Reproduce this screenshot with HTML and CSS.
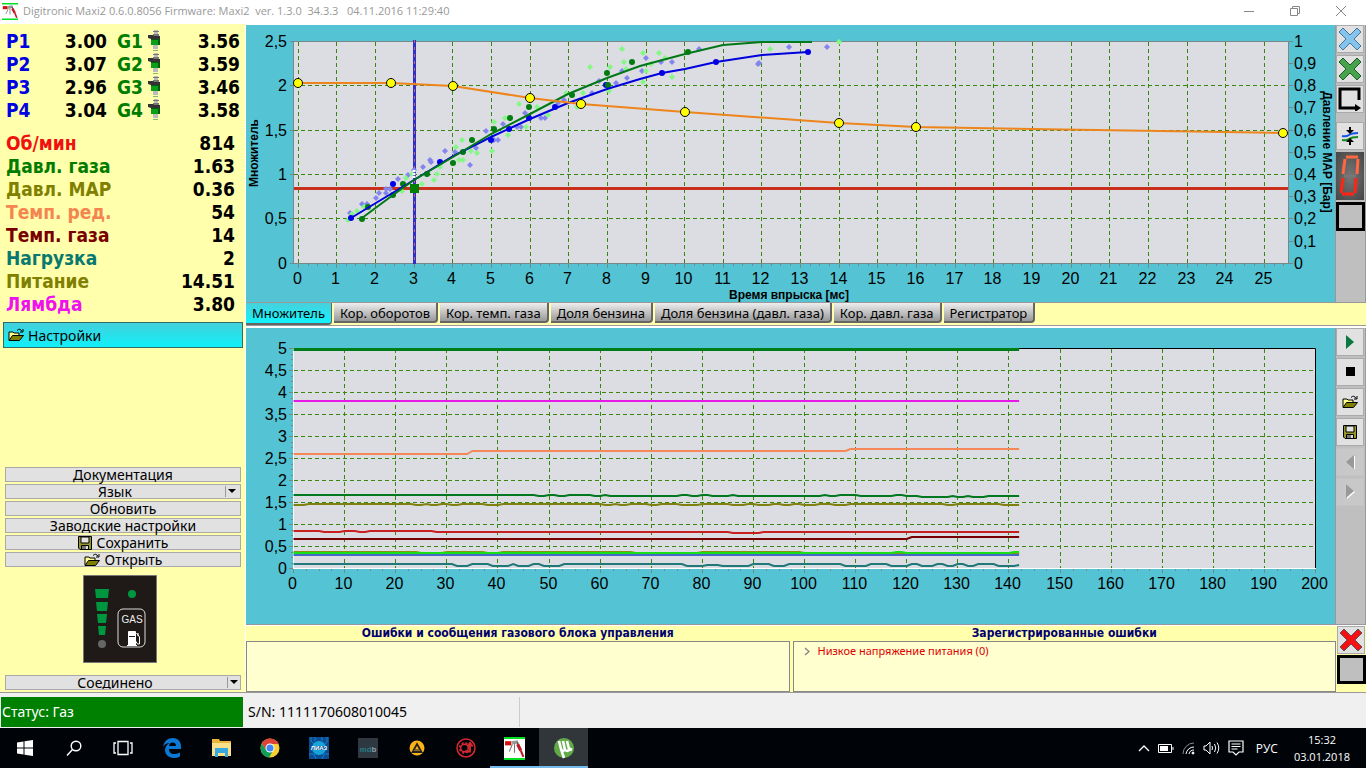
FILE: index.html
```html
<!DOCTYPE html>
<html lang="ru">
<head>
<meta charset="utf-8">
<title>Digitronic Maxi2</title>
<link rel="stylesheet" href="styles.css">
</head>
<body>
<svg class="defs" aria-hidden="true">
  <symbol id="app" viewBox="0 0 20 22" preserveAspectRatio="none"><path fill="#fff" d="M0 0h20v22H0z"/><path fill="#00e020" d="M0 0h20v2H0zM0 20h20v2H0z"/><path fill="#d01010" d="M1 4h6v4H1z"/><path fill="#999" d="M7 4l6-1 1 3-6 1z"/><path d="M8 7L5 14M10 6v9" stroke="#777" fill="none"/><path d="M12.500 5L15 12" stroke="#555" stroke-width="1.500"/><path d="M13 7l3 6" stroke="#c01824" stroke-width="3"/><path d="M16 13l2.500 6" stroke="#c01824" stroke-width="2"/></symbol>
  <symbol id="folder" viewBox="0 0 16 14"><path d="M1 12V4h4l1 1h5v2" fill="#ffff90" stroke="#000"/><path d="M1 12.500L4.500 7.500h11L11.500 12.500z" fill="#808000" stroke="#000"/><path d="M9 2.500q3-3 5 1M15 1v3h-3" fill="none" stroke="#000"/></symbol>
  <symbol id="floppy" viewBox="0 0 14 14"><path d="M.5.5h13v13H2l-1.500-1.500z" fill="#98982a" stroke="#000"/><path d="M3 1h8v6H3z" fill="#e4e4e4" stroke="#000"/><path d="M3.500 9.500h7v4h-7z" fill="#777" stroke="#000"/><path fill="#ddd" d="M8 10h2v3H8z"/></symbol>
  <symbol id="cross" viewBox="0 0 26 26"><path d="M6 2L13 9L20 2L24 6L17 13L24 20L20 24L13 17L6 24L2 20L9 13L2 6z"/></symbol>
  <symbol id="injector" viewBox="0 0 14 23"><path fill="#bbb" d="M6 0h4v6H6z"/><path fill="#777" d="M5 1h6v1H5zM5 4h6v2H5z"/><path fill="#333" d="M0 5h5l1 1h6v3H3L0 8z"/><path fill="#08a018" d="M3 9h9v6H3z"/><path fill="#055c10" d="M10 9h2v6h-2zM3 9h9v1H3z"/><path fill="#bbb" d="M5 15h5v4H5z"/><path fill="#7db87d" d="M5 20h5v1H5z"/></symbol>
</svg>

<header class="titlebar">
  <svg class="titlebar-icon"><use href="#app"/></svg>
  <h1 class="titlebar-text">Digitronic Maxi2 0.6.0.8056 Firmware: Maxi2&nbsp; ver. 1.3.0&nbsp; 34.3.3&nbsp;&nbsp; 04.11.2016 11:29:40</h1>
  <button class="win-button" aria-label="Свернуть"><svg width="12" height="12"><path d="M1 6.500h10"/></svg></button>
  <button class="win-button" aria-label="Развернуть"><svg width="12" height="12"><path d="M1.500 3.500h7v7h-7zM3.500 3V1.500h7v7H9"/></svg></button>
  <button class="win-button" aria-label="Закрыть"><svg width="12" height="12"><path d="M1 1l10 10M11 1L1 11"/></svg></button>
</header>

<main class="workspace">
  <aside class="sidebar">
    <table class="injection">
      <tr><th class="blue">P1</th><td>3.00</td><th class="green">G1</th><td class="inj"><svg><use href="#injector"/></svg></td><td>3.56</td></tr>
      <tr><th class="blue">P2</th><td>3.07</td><th class="green">G2</th><td class="inj"><svg><use href="#injector"/></svg></td><td>3.59</td></tr>
      <tr><th class="blue">P3</th><td>2.96</td><th class="green">G3</th><td class="inj"><svg><use href="#injector"/></svg></td><td>3.46</td></tr>
      <tr><th class="blue">P4</th><td>3.04</td><th class="green">G4</th><td class="inj"><svg><use href="#injector"/></svg></td><td>3.58</td></tr>
    </table>
    <table class="params">
      <tr><th class="red">Об/мин</th><td>814</td></tr>
      <tr><th class="green">Давл. газа</th><td>1.63</td></tr>
      <tr><th class="olive">Давл. MAP</th><td>0.36</td></tr>
      <tr><th class="coral">Темп. ред.</th><td>54</td></tr>
      <tr><th class="maroon">Темп. газа</th><td>14</td></tr>
      <tr><th class="teal">Нагрузка</th><td>2</td></tr>
      <tr><th class="olive">Питание</th><td>14.51</td></tr>
      <tr><th class="magenta">Лямбда</th><td>3.80</td></tr>
    </table>
    <button class="settings"><svg width="16" height="14"><use href="#folder"/></svg>Настройки</button>
    <div class="actions">
      <button class="action">Документация</button>
      <div class="combo"><select class="action" aria-label="Язык"><option>Язык</option></select><svg class="combo-arrow" width="12" height="11"><path d="M.5 0v11" stroke="#999"/><path d="M3 3h8L7 7z"/></svg></div>
      <button class="action">Обновить</button>
      <button class="action">Заводские настройки</button>
      <button class="action"><svg width="14" height="14"><use href="#floppy"/></svg>Сохранить</button>
      <button class="action"><svg width="16" height="14"><use href="#folder"/></svg>Открыть</button>
    </div>
    <svg class="gas" viewBox="0 0 74 88" role="img" aria-label="GAS">
      <path fill="#1f1a17" stroke="#777" d="M.5.5h73v87H.5z"/>
      <g fill="#009640"><path d="M12 14h14l-1 9H13zM13 27h12l-1 9H14zM14 39h10l-1 9h-8zM15 51h8l-1 9h-6z"/><circle cx="49" cy="19" r="4"/></g>
      <circle cx="19" cy="69" r="4" fill="#666"/>
      <rect x="35" y="34" width="27" height="38" rx="5" fill="none" stroke="#ddd"/>
      <text class="gas-text" x="49" y="48">GAS</text>
      <path fill="#fff" d="M46 57h6v4h-6zM44 70h10v1H44zM45 62h8v8h-8z"/><path fill="none" stroke="#fff" d="M45.500 70V56.500h7V66l2 3h2v-7l-3-4M55 58v3"/>
    </svg>
    <div class="combo"><select class="action" aria-label="Соединение"><option>Соединено</option></select><svg class="combo-arrow" width="12" height="11"><path d="M.5 0v11" stroke="#999"/><path d="M3 3h8L7 7z"/></svg></div>
  </aside>

  <section class="content">
    <div class="map-row">
      <svg class="chart" id="map" viewBox="0 0 1089 275" preserveAspectRatio="xMinYMin" role="img" aria-label="Множитель"></svg>
      <div class="toolbar">
        <button class="tool" aria-label="Удалить бензин"><svg width="26" height="26" fill="#84c4ec" stroke="#43749a"><use href="#cross"/></svg></button>
        <button class="tool" aria-label="Удалить газ"><svg width="26" height="26" fill="#46a34c" stroke="#1c5a2a"><use href="#cross"/></svg></button>
        <button class="tool" aria-label="Контур"><svg width="24" height="24"><path d="M21 13V2H2v19h16" fill="none" stroke="#000" stroke-width="3"/><path d="M17 17l6 4-6 4z"/></svg></button>
        <button class="tool gap" aria-label="Совместить"><svg width="18" height="18"><path d="M1 9q4 1 7-1t9-2" stroke="#1455e8" stroke-width="2" fill="none"/><path d="M1 13q4 1 7-1t9-2" stroke="#118a22" stroke-width="2" fill="none"/><path d="M8 0h2v3h3L9 7 5 3h3zM8 18h2v-3h3l-4-4-4 4h3z"/></svg></button>
        <div class="digit"><svg width="20" height="42" viewBox="0 0 20 42"><g fill="none" stroke-width="3"><path stroke="#ff6840" d="M6 2h12M5 4L3 19M18 4l-1 15"/><path stroke="#ff2414" d="M3 23L1 38M16 23l-1 15M2 39h12"/><path stroke="#777" d="M4 21h12"/></g></svg></div>
        <button class="swatch" aria-label="Цвет"></button>
      </div>
    </div>
    <nav class="tabs" role="tablist">
      <button class="tab active" role="tab">Множитель</button><button class="tab" role="tab">Кор. оборотов</button><button class="tab" role="tab">Кор. темп. газа</button><button class="tab" role="tab">Доля бензина</button><button class="tab" role="tab">Доля бензина (давл. газа)</button><button class="tab" role="tab">Кор. давл. газа</button><button class="tab" role="tab">Регистратор</button>
    </nav>
    <div class="scope-row">
      <svg class="chart" id="scope" viewBox="0 0 1089 293" preserveAspectRatio="xMinYMin" role="img" aria-label="Осциллограф"></svg>
      <div class="toolbar">
        <button class="tool" aria-label="Пуск"><svg width="8" height="14"><path fill="#087840" d="M0 0l8 7-8 7z"/></svg></button>
        <button class="tool" aria-label="Стоп"><svg width="9" height="9"><path d="M0 0h9v9H0z"/></svg></button>
        <button class="tool" aria-label="Открыть"><svg width="16" height="14"><use href="#folder"/></svg></button>
        <button class="tool" aria-label="Сохранить"><svg width="14" height="14"><use href="#floppy"/></svg></button>
        <button class="tool" disabled aria-label="Назад"><svg width="9" height="14"><path fill="#fff" d="M8 1h1v13H8z"/><path fill="#999" d="M8 0v14L0 7z"/></svg></button>
        <button class="tool" disabled aria-label="Вперёд"><svg width="9" height="15"><path fill="#fff" d="M1 1l8 7-8 7z"/><path fill="#999" d="M0 0l8 7-8 7z"/></svg></button>
      </div>
    </div>
    <div class="errors">
      <section class="error-panel"><h2>Ошибки и сообщения газового блока управления</h2><div class="error-list"></div></section>
      <section class="error-panel"><h2>Зарегистрированные ошибки</h2><div class="error-list"><svg width="6" height="9"><path d="M1 1l4 3.500L1 8" fill="none" stroke="#888" stroke-width="1.500"/></svg>Низкое напряжение питания (0)</div></section>
      <div class="error-tools">
        <button class="tool" aria-label="Стереть ошибки"><svg width="26" height="26" fill="#f81010" stroke="#556" stroke-width="1"><use href="#cross"/></svg></button>
        <button class="swatch" aria-label="Цвет"></button>
      </div>
    </div>
  </section>
</main>

<footer class="statusbar"><span class="status">Статус: Газ</span><span class="serial">S/N: 1111170608010045</span></footer>

<nav class="taskbar">
  <button class="task" aria-label="Пуск"><svg width="16" height="16" fill="#fff"><path d="M0 2.500l6.500-1v6H0zM7.500 1.300L16 0v7.500H7.500zM0 8.500h6.500v6L0 13.500zM7.500 8.500H16V16l-8.500-1.300z"/></svg></button>
  <button class="task" aria-label="Поиск"><svg width="16" height="16" fill="none" stroke="#fff" stroke-width="1.400"><circle cx="10" cy="6" r="4.800"/><path d="M6.500 9.500L1 15.500"/></svg></button>
  <button class="task" aria-label="Представление задач"><svg width="20" height="16" fill="none" stroke="#fff" stroke-width="1.300"><path d="M5 1.500h10v13H5zM3 3H1v10h2M17 3h2v10h-2"/></svg></button>
  <button class="task" aria-label="Edge"><svg width="20" height="20" viewBox="0 0 20 20"><path fill="#0a78d4" d="M1 9C2 3 6 0 11 0c5 0 8 4 8 8v3H7c0 3 2 5 5 5 2 0 4-.5 6-1.500v4C16 19.500 14 20 12 20c-6 0-9-4-9-8 0-3 2-6 5-7C4 5 2 7 1 9zm6-1h7c0-2-1-3.500-3.200-3.500S7.300 6 7 8z"/></svg></button>
  <button class="task" aria-label="Проводник"><svg width="20" height="20"><path fill="#e9b53c" d="M1 1h7l1 2h11v15H1z"/><path fill="#fbe08b" d="M1 5h19v13H1z"/><path fill="#38a9e0" d="M4 10h13v9h-3v-4H7v4H4z"/></svg></button>
  <button class="task" aria-label="Chrome"><svg width="20" height="20"><circle cx="10" cy="10" r="9.500" fill="#f9cf31"/><path fill="#db4437" d="M1.700 5.500a9.500 9.500 0 0 1 17 .5H10L6 12z"/><path fill="#109d58" d="M1.700 5.500A9.500 9.500 0 0 0 9 19.500L13.500 12 6 12z"/><circle cx="10" cy="10" r="4.500" fill="#fff"/><circle cx="10" cy="10" r="3.500" fill="#4285f4"/></svg></button>
  <button class="task" aria-label="Диагностика"><svg width="20" height="22"><path fill="#0b4c92" d="M0 0h20v22H0z"/><path stroke="#1480c8" fill="none" d="M2 0v4l3 3M18 0v5l-3 3M0 17h5l2 5M20 17h-5l-2 5M6 0v4M13 0v4"/><ellipse cx="10" cy="11" rx="7" ry="7" fill="#16a4d8"/><path fill="#0b5c9c" d="M3 9h14v4H3z"/><text class="logo-white" x="10" y="13">ЛИАЗ</text></svg></button>
  <button class="task" aria-label="mdb"><svg width="20" height="20"><path fill="#2d3840" d="M0 0h20v20H0z"/><text class="logo-grey" x="10" y="14"><tspan class="logo-teal">md</tspan>b</text></svg></button>
  <button class="task" aria-label="AIMP"><svg width="18" height="18"><circle cx="9" cy="9" r="7.500" fill="#fcb316"/><path d="M9 5l4.500 8h-9z" fill="none" stroke="#222" stroke-width="1.800"/><path d="M7 11h4" stroke="#222"/></svg></button>
  <button class="task" aria-label="Сервис"><svg width="20" height="22" fill="none" stroke="#d82830"><circle cx="10" cy="11" r="9" stroke-width="1.500"/><circle cx="8.500" cy="11" r="3.800" stroke-width="1.500"/><circle cx="8.500" cy="11" r="5" stroke-width="1.500" stroke-dasharray="2 2"/><path d="M9 14.500h5V8" stroke-width="1.800"/><path d="M11 9L14 5l3 4z" fill="#d82830"/></svg></button>
  <button class="task running" aria-label="Digitronic"><svg width="21" height="23"><use href="#app"/></svg></button>
  <button class="task running current" aria-label="µTorrent"><svg width="22" height="24"><circle cx="11" cy="12" r="10" fill="#62aa48"/><path d="M6 5l2 8q1 3 4 1l-2-9M12 14q3 2 5-1l2 1M14 5l2 8M8 13l3 9" stroke="#fff" stroke-width="2.600" fill="none"/></svg></button>
  <div class="tray">
    <svg width="12" height="7" fill="none" stroke="#fff" stroke-width="1.300"><path d="M1 6l5-5 5 5"/></svg>
    <svg width="16" height="9"><path fill="none" stroke="#fff" d="M.5.5h13v8H.5zM15 3v3"/><path fill="#fff" d="M2 2h8v5H2z"/></svg>
    <svg width="13" height="13" fill="none" stroke="#fff"><path stroke="#888" d="M1 12A11 11 0 0 1 12 1"/><path d="M4 12a8 8 0 0 1 8-7M7 12a5 5 0 0 1 5-4"/><circle cx="11" cy="11" r="1" fill="#fff"/></svg>
    <svg width="17" height="14" fill="none" stroke="#fff"><path d="M1 5h2l4-4v12L3 9H1zM9 5q1 2 0 4M11.500 3q2.500 4 0 8M14 1.500q3.500 5.500 0 11"/></svg>
    <svg width="16" height="16" fill="none" stroke="#fff" stroke-width="1.200"><path d="M1 1h14v11h-4l-3 3-3-3H1zM3.500 4h9M3.500 6.500h9M3.500 9h6"/></svg>
    <span class="lang">РУС</span>
    <time class="clock">15:32<br>03.01.2018</time>
  </div>
</nav>
<script src="charts.js"></script>
</body>
</html>
```

FILE: styles.css
```css
* { box-sizing: border-box; }
body {
  margin: 0;
  height: 100vh;
  display: flex;
  flex-direction: column;
  background: #fff;
  color: #000;
  font: 14px/17px "Noto Sans", sans-serif;
  overflow: hidden;
}
button, select { font: inherit; color: inherit; margin: 0; padding: 0; border: 0; background: none; }
svg { flex: none; display: block; }
.defs { position: absolute; width: 0; height: 0; }

.titlebar { height: 24px; flex: none; display: flex; align-items: center; padding: 0 2px 2px 2px; }
.titlebar-icon { width: 16px; height: 17px; }
.titlebar-text { flex: 1; margin: 0 0 0 5px; font: 11px/16px "Open Sans", sans-serif; color: #999; white-space: nowrap; }
.win-button { width: 46px; height: 22px; display: grid; place-items: center; }
.win-button svg { fill: none; stroke: #888; }

.workspace { flex: 1; min-height: 0; display: flex; background: #ffffac; border-bottom: 1px solid #999; }
.sidebar { width: 246px; flex: none; display: flex; flex-direction: column; padding: 6px 2px 2px 3px; border-right: 1px solid #fff; }
.injection, .params { border-collapse: collapse; font: bold 19px/23px "DejaVu Sans Condensed", "DejaVu Sans", sans-serif; }
.injection th, .params th { text-align: left; padding: 0 0 0 3px; }
.injection td, .params td { text-align: right; padding: 0; }
.injection { width: 237px; table-layout: fixed; margin-bottom: 10px; }
.injection th:first-child { width: 40px; }
.injection td:nth-child(2) { width: 64px; }
.injection th:nth-child(3) { width: 38px; padding-left: 10px; }
.injection .inj { width: 20px; }
.injection .inj svg { width: 14px; height: 23px; margin-left: 3px; }
.params { width: 232px; }
.blue { color: #0000e0; }
.green { color: #007c00; }
.red { color: #f01010; }
.olive { color: #808000; }
.coral { color: #f58550; }
.maroon { color: #780000; }
.teal { color: #087870; }
.magenta { color: #f010f0; }
.settings { height: 26px; margin-top: 6px; padding-left: 4px; display: flex; align-items: center; gap: 4px; border: 1px solid #336b6b; background: linear-gradient(#42d0dc, #10f0f8); }
.actions { margin-top: auto; display: flex; flex-direction: column; gap: 2px; padding: 0 2px; }
.action { width: 100%; height: 15px; display: flex; justify-content: center; align-items: center; gap: 5px; border: 1px solid #aaa; background: #e1e1e1; line-height: 15px; white-space: nowrap; }
select.action { appearance: none; text-align: center; text-align-last: center; padding-right: 16px; line-height: 13px; }
.combo { position: relative; }
.sidebar > .combo { padding: 0 2px; }
.combo-arrow { position: absolute; right: 4px; top: 2px; }
.gas { width: 74px; height: 88px; margin: 8px 0 12px 80px; }
.gas-text { font: 10px "Liberation Sans", sans-serif; fill: #eee; text-anchor: middle; }

.content { flex: 1; min-width: 0; display: flex; flex-direction: column; }
.map-row, .scope-row { min-height: 0; display: flex; background: #54c4d4; border-top: 1px solid #fff; }
.map-row { flex: 277 1 0; }
.scope-row { flex: 297 1 0; border-bottom: 1px solid #999; border-top: 2px solid #fff; }
.chart { flex: 1; min-width: 0; height: 100%; overflow: visible; font: 16px "Liberation Sans", sans-serif; }
.chart .end { text-anchor: end; }
.chart .mid { text-anchor: middle; }
.chart .axis { font: bold 12px "Liberation Sans", sans-serif; text-anchor: middle; }
.grid-line { stroke: #388810; stroke-dasharray: 4 3; }
.axis-line { stroke: #788; fill: none; }
.toolbar { width: 31px; flex: none; display: flex; flex-direction: column; gap: 2px; background: #bfbfbf; border-left: 1px solid #999; border-right: 1px solid #999; }
.tool { width: 28px; height: 28px; flex: none; display: grid; place-items: center; border: 1px solid #aaa; background: #e1e1e1; overflow: hidden; }
.tool:disabled { background: #c8c8c8; border-color: #c4c4c4; }
.gap { margin-top: 7px; }
.digit { height: 48px; width: 28px; display: grid; place-items: center; background: radial-gradient(#777, #444); }
.swatch { width: 29px; height: 29px; flex: none; border: 3px solid #000; background: #bfbfbf; }

.tabs { height: 24px; flex: none; display: flex; gap: 2px; border-top: 1px solid #999; border-bottom: 1px solid #999; font-size: 13px; }
.tab { height: 20px; padding: 2px 6px 0; border-right: 2px solid #666; border-bottom: 2px solid #666; border-radius: 0 0 4px 0; background: linear-gradient(#eee, #999); white-space: nowrap; }
.tab.active { height: 22px; background: linear-gradient(#48d0dc, #10f4fc); border-right-width: 1px; }

.errors { height: 67px; flex: none; display: flex; gap: 3px; border-top: 1px solid #fff; }
.error-panel { flex: 1; min-width: 0; display: flex; flex-direction: column; }
.error-panel h2 { margin: 0; font: bold 12px/15px "DejaVu Sans Condensed", "DejaVu Sans", sans-serif; color: #000070; text-align: center; }
.error-list { flex: 1; display: flex; align-items: flex-start; gap: 8px; padding: 2px 10px; border: 1px solid #888; background: #ffffd0; color: #e00000; font-size: 11px; line-height: 13px; }
.error-list svg { margin-top: 3px; }
.error-tools { width: 29px; margin-left: -2px; display: flex; flex-direction: column; gap: 1px; }

.statusbar { height: 35px; flex: none; display: flex; align-items: center; padding: 3px 1px 1px; background: #f0f0f0; }
.status { width: 242px; height: 30px; padding-left: 1px; line-height: 30px; background: #008000; color: #fff; }
.serial { width: 277px; height: 30px; padding-left: 5px; line-height: 30px; border-right: 1px solid #ccc; }

.taskbar { height: 40px; flex: none; display: flex; background: #000409; color: #fff; }
.task { width: 49px; display: grid; place-items: center; }
.running { box-shadow: inset 0 -2px #76b9ed; }
.current { background: #30363a; }
.logo-white, .logo-grey { font: bold 6px "Liberation Sans", sans-serif; fill: #fff; text-anchor: middle; }
.logo-grey { font-size: 8px; fill: #99a; }
.logo-teal { fill: #2a7884; }
.tray { margin-left: auto; padding-right: 16px; display: flex; align-items: center; gap: 10px; font: 11px/17px "Open Sans", sans-serif; }
.tray svg { margin-right: -2px; }
.lang { font-size: 12px; margin-left: 4px; }
.clock { text-align: center; margin-left: 6px; }
```

FILE: charts.js
```js
const NS = 'http://www.w3.org/2000/svg';
const add = (svg, tag, attrs, text) => {
  const el = document.createElementNS(NS, tag);
  for (const key in attrs) el.setAttribute(key, attrs[key]);
  if (text !== undefined) el.textContent = text;
  svg.appendChild(el);
};
const line = (svg, cls, x1, y1, x2, y2) => add(svg, 'path', { class: cls, d: `M${x1} ${y1}L${x2} ${y2}` });
const curve = (svg, pts, stroke, width) => add(svg, 'polyline', { points: pts, fill: 'none', stroke, 'stroke-width': width });
const pairs = s => s.split(' ').map(p => p.split(',').map(Number));
const crisp = v => Math.floor(v) + 0.5;
const comma = v => String(v).replace('.', ',');

// Multiplier map
const map = document.getElementById('map');
add(map, 'rect', { x: 48, y: 16, width: 995, height: 223, fill: '#dcdde2' });
for (let i = 0; i <= 25; i++) {
  const x = crisp(52.3 + 38.64 * i);
  line(map, 'grid-line', x, 17, x, 238);
  line(map, 'axis-line', x, 239, x, 243);
  for (let k = 1; k < 4 && i + k / 4 <= 25.5; k++) line(map, 'axis-line', crisp(x + 9.66 * k), 239, crisp(x + 9.66 * k), 241);
  add(map, 'text', { class: 'mid', x: x - 1, y: 259 }, i);
}
for (let i = 0; i <= 5; i++) {
  const y = crisp(238.3 - 44.4 * i);
  if (i && i < 5) line(map, 'grid-line', 48, y, 1042, y);
  line(map, 'axis-line', 44, y, 48, y);
  add(map, 'text', { class: 'end', x: 41, y: y + 5.5 }, comma(i / 2));
}
for (let i = 0; i <= 10; i++) {
  const y = crisp(238.3 - 22.2 * i);
  line(map, 'axis-line', 1043, y, 1047, y);
  add(map, 'text', { x: 1048, y: y + 5.5 }, comma(i / 10));
}
add(map, 'rect', { class: 'axis-line', x: 47.5, y: 16.5, width: 995, height: 222 });
add(map, 'path', { d: 'M168.500 15V239', stroke: '#3030c8', 'stroke-width': 3 });
add(map, 'path', { d: 'M168.500 15V239', stroke: '#c06870', 'stroke-dasharray': '3 4' });
add(map, 'path', { d: 'M48 163.500H1042', stroke: '#c8301c', 'stroke-width': 3 });

const small = (s, fill) => pairs(s).forEach(([x, y]) => add(map, 'path', { d: `M${x} ${y - 3}l3 3l-3 3l-3 -3z`, fill }));
const large = (s, fill) => pairs(s).forEach(([x, y]) => add(map, 'circle', { cx: x, cy: y, r: 3, fill }));
small('104,188 116,179 121,179 130,173 133,168 140,168 140,164 144,164 152,154 162,150 168,145 177,142 184,135 185,137 199,126 209,127 224,140 230,123 240,106 248,115 252,115 257,99 271,102 275,102 279,88 295,93 299,93 312,78 318,75 346,68 353,56 370,58 376,46 381,53 396,46 400,33 415,37 426,37 453,24 512,39 513,38 543,22 581,22', '#8484ee');
small('102,195 106,189 111,186 118,182 156,166 160,153 166,149 176,159 188,155 191,149 194,142 210,122 213,135 217,135 216,115 225,126 231,128 246,126 248,97 259,93 262,110 273,79 280,102 291,82 302,90 320,68 331,82 337,68 344,42 364,42 363,66 376,24 378,37 380,44 397,28 405,39 400,46 397,57 413,28 419,33 426,52 524,24 593,17', '#84f884');
large('105,193 147,159 194,137 245,115 263,104 283,93 309,82 360,60 416,48 470,37 562,27', '#0000e8');
large('116,194 122,182 147,170 157,159 181,149 207,138 217,127 226,115 248,104 264,93 283,82 326,70 362,60 361,48 386,37 442,27', '#007c10');
curve(map, '105,193 168,155 207,131 245,112 284,94 322,78 361,64 394,54 416,48 439,44 470,37 516,30 562,27', '#0000dc', 2);
curve(map, '116,193 147,170 168,155 207,132 245,109 284,89 322,69 361,53 394,41 439,29 477,20 516,17 566,17', '#007818', 2);
const pressure = '52,58 145,58 207,61 284,73 335,79 439,87 593,98 670,102 1037,108';
curve(map, pressure, '#ee851c', 2);
pairs(pressure).forEach(([x, y]) => add(map, 'circle', { cx: x, cy: y, r: 4.5, fill: '#ffff00', stroke: '#000' }));
add(map, 'rect', { x: 164, y: 159, width: 9, height: 9, fill: '#008000' });
add(map, 'path', { d: 'M168 145v9', stroke: '#fff', 'stroke-width': 3, 'stroke-dasharray': '2 1' });
add(map, 'text', { class: 'axis', transform: 'translate(12 128) rotate(-90)' }, 'Множитель');
add(map, 'text', { class: 'axis', x: 543, y: 274 }, 'Время впрыска [мс]');
add(map, 'text', { class: 'axis', transform: 'translate(1077 127) rotate(90)' }, 'Давление MAP [Бар]');

// Recorder
const scope = document.getElementById('scope');
const sx = v => 47.5 + 5.11 * v;
add(scope, 'rect', { x: 47, y: 20, width: 1023, height: 221, fill: '#dcdde2' });
for (let i = 0; i <= 20; i++) {
  const x = crisp(sx(i * 10));
  if (i && i < 20) line(scope, 'grid-line', x, 21, x, 240);
  line(scope, 'axis-line', x, 241, x, 245);
  for (let k = 1; k < 4 && i < 20; k++) line(scope, 'axis-line', crisp(x + 12.8 * k), 241, crisp(x + 12.8 * k), 243);
  add(scope, 'text', { class: 'mid', x: x - 1, y: 261 }, i * 10);
}
for (let i = 0; i <= 10; i++) {
  const y = crisp(240 - 22 * i);
  if (i && i < 10) line(scope, 'grid-line', 48, y, 1069, y);
  line(scope, 'axis-line', 43, y, 47, y);
  for (let k = 1; k < 4 && i < 10; k++) line(scope, 'axis-line', 45, crisp(y - 5.5 * k), 47, crisp(y - 5.5 * k));
  add(scope, 'text', { class: 'end', x: 41, y: y + 5.5 }, comma(i / 2));
}
add(scope, 'path', { d: 'M47.500 20.500H1069.500V241', stroke: '#000', fill: 'none' });
add(scope, 'path', { d: 'M47.500 20V240.500H1070', stroke: '#fff', fill: 'none' });

// A level is held until the next change point; the last one runs to t = 142
const trace = (steps, color, width = 2) => {
  const pts = [];
  pairs(steps).forEach(([t, y], i, all) => {
    const end = i + 1 < all.length ? all[i + 1][0] - 1 : 142;
    pts.push(`${sx(t)},${y}`, `${sx(Math.max(t, end))},${y}`);
  });
  curve(scope, pts.join(' '), color, width);
};
trace('0,21.5', '#007c18', 3);
trace('0,73', '#e818e8');
trace('0,126 35,123 109,121', '#f58858');
trace('0,167 48,168 50,167 52,168 54,167 59,168 61,167 62,168 76,167 78,168 80,167 82,168 86,167 87,168 104,167 105,168 107,167 111,168 118,167 120,168 123,169 129,168 130,169 132,168 133,169 136,168', '#007820');
trace('0,177 3,176 24,177 26,176 27,177 29,176 31,177 33,176 38,177 41,176 61,177 63,176 64,177 66,176 70,177 72,176 76,177 80,176 86,177 89,176 91,177 94,176 96,177 98,176 100,177 103,176 106,177 109,176 128,177 130,176 139,177', '#808010');
trace('0,203 6,204 10,203 13,204 15,203 28,204 86,205 92,204', '#c82020');
trace('0,211 121,209', '#780000');
trace('0,224 25,225 30,224 38,225 41,224 67,225 80,224 100,225', '#889010');
trace('0,227', '#4868c8');
trace('0,225 118,224 120,225 141,224', '#18e018');
trace('0,236 32,238 35,236 39,238 43,236 44,238 47,236 49,238 53,236 77,238 81,237 84,238 90,236 94,238 97,236 108,238 113,236 117,238 121,236 123,238 126,236 128,238 130,236 132,238 134,236 138,238 142,237', '#207878');
```
